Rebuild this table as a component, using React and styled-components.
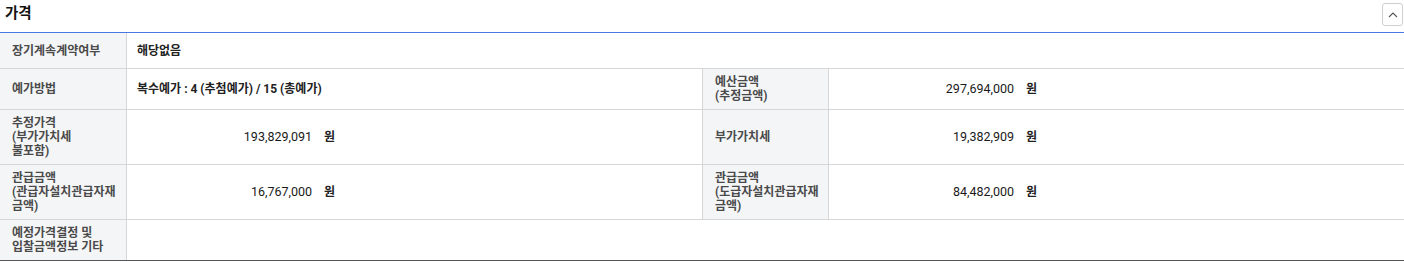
import React from "react";
import styled, { createGlobalStyle } from "styled-components";

const GlobalStyle = createGlobalStyle`
   html, body {
      margin: 0;
      padding: 0;
      background: #fff;
   }
   body {
      font-family: Roboto, "Noto Sans CJK KR", sans-serif;
      color: #222;
   }
`;

const Section = styled.section`
   width: 1404px;
`;

const Header = styled.div`
   display: flex;
   align-items: center;
   justify-content: space-between;
   height: 33px;
   border-bottom: 1px solid #4a78e2;
   padding: 0 1px 0 5px;
   box-sizing: border-box;
`;

const Title = styled.h3`
   margin: 0;
   font-size: 14.5px;
   font-weight: 700;
   color: #111;
   line-height: 1;
   padding-bottom: 4px;
`;

const ToggleButton = styled.button`
   width: 21px;
   height: 23px;
   padding: 0;
   border: 1px solid #cfcfcf;
   border-radius: 3px;
   background: #fff;
   display: flex;
   align-items: center;
   justify-content: center;
   margin-bottom: 3px;
`;

const Grid = styled.div`
   display: grid;
   grid-template-columns: 127px 576px 126px 1fr;
   border-bottom: 1px solid #555;
`;

const Label = styled.div`
   box-sizing: border-box;
   min-height: 36px;
   display: flex;
   align-items: center;
   padding: 6px 8px 6px 12px;
   background: #f4f5f7;
   border-right: 1px solid #d6d6d6;
   border-bottom: ${(p) => (p.last ? "none" : "1px solid #d6d6d6")};
   font-size: 12px;
   line-height: 14px;
   font-weight: 700;
   color: #4a4a4a;
   white-space: nowrap;
`;

const Value = styled.div`
   box-sizing: border-box;
   min-height: 36px;
   display: flex;
   align-items: center;
   padding: 6px 10px;
   grid-column: span ${(p) => p.span || 1};
   border-right: ${(p) => (p.end ? "none" : "1px solid #d6d6d6")};
   border-bottom: ${(p) => (p.last ? "none" : "1px solid #d6d6d6")};
   font-size: 12px;
   line-height: 14px;
   font-weight: 700;
   color: #222;
`;

const Amount = styled.span`
   display: inline-block;
   width: 175px;
   text-align: right;
   font-weight: 400;
   font-size: 12.5px;
   color: #1a1a1a;
`;

const Unit = styled.span`
   margin-left: 12px;
`;

function Money({ value }) {
   return (
      <>
         <Amount>{value}</Amount>
         <Unit>원</Unit>
      </>
   );
}

export default function App() {
   return (
      <>
         <GlobalStyle />
         <Section>
            <Header>
               <Title>가격</Title>
               <ToggleButton aria-label="접기">
                  <svg width="10" height="6" viewBox="0 0 10 6">
                     <path d="M1 5 L5 1 L9 5" fill="none" stroke="#555" strokeWidth="1.1" />
                  </svg>
               </ToggleButton>
            </Header>
            <Grid>
               <Label>장기계속계약여부</Label>
               <Value span={3} end>
                  해당없음
               </Value>

               <Label>예가방법</Label>
               <Value>복수예가 : 4 (추첨예가) / 15 (총예가)</Value>
               <Label>
                  예산금액
                  <br />
                  (추정금액)
               </Label>
               <Value end>
                  <Money value="297,694,000" />
               </Value>

               <Label>
                  추정가격
                  <br />
                  (부가가치세
                  <br />
                  불포함)
               </Label>
               <Value>
                  <Money value="193,829,091" />
               </Value>
               <Label>부가가치세</Label>
               <Value end>
                  <Money value="19,382,909" />
               </Value>

               <Label>
                  관급금액
                  <br />
                  (관급자설치관급자재
                  <br />
                  금액)
               </Label>
               <Value>
                  <Money value="16,767,000" />
               </Value>
               <Label>
                  관급금액
                  <br />
                  (도급자설치관급자재
                  <br />
                  금액)
               </Label>
               <Value end>
                  <Money value="84,482,000" />
               </Value>

               <Label last>
                  예정가격결정 및
                  <br />
                  입찰금액정보 기타
               </Label>
               <Value span={3} end last></Value>
            </Grid>
         </Section>
      </>
   );
}
